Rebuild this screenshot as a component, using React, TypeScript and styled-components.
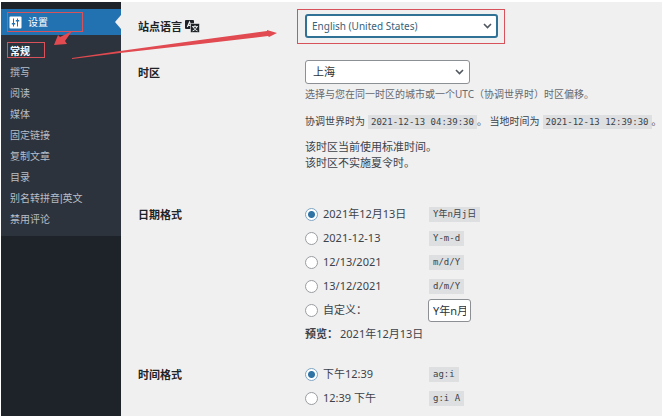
import React, { useState } from "react";
import styled, { createGlobalStyle, css } from "styled-components";

const GlobalStyle = createGlobalStyle`
  *, *::before, *::after { box-sizing: border-box; }
  body {
    margin: 0;
    background: #fff;
    color: #3c434a;
    font: 11px/16px "Noto Sans", "Noto Sans CJK SC", sans-serif;
  }
`;

const Shell = styled.div`
  position: relative;
  display: flex;
  height: 100vh;
  padding: 2px 0 0 1px;
  overflow: hidden;
`;

const Sidebar = styled.nav`
  flex: 0 0 120px;
  padding-top: 7px;
  background: #1d2329;
`;

const MenuHead = styled.a`
  position: relative;
  display: flex;
  align-items: center;
  gap: 6px;
  height: 26px;
  padding-left: 8px;
  background: #2271b1;
  color: #fff;
  font-size: 10px;
  text-decoration: none;

  &::after {
    content: "";
    position: absolute;
    top: 6px;
    right: 0;
    border: 7px solid transparent;
    border-left-width: 0;
    border-right: 6px solid #f0f0f1;
  }
`;

const Submenu = styled.ul`
  margin: 0;
  padding: 6px 0;
  list-style: none;
  background: #2c333c;
`;

const SubmenuLink = styled.a<{ $current?: boolean }>`
  display: block;
  padding-left: 9px;
  font-family: "Liberation Sans", "Noto Sans CJK SC", sans-serif;
  font-size: 10px;
  line-height: 21px;
  color: ${(p) => (p.$current ? "#fff" : "#b9bec5")};
  font-weight: ${(p) => (p.$current ? 700 : 400)};
  text-decoration: none;
`;

const Main = styled.main`
  flex: 1;
  min-width: 0;
  padding: 12px 0 0 17px;
  background: #f0f0f1;
`;

const Field = styled.section<{ $gap: number }>`
  display: grid;
  grid-template-columns: 167px minmax(0, 1fr);
  margin-bottom: ${(p) => p.$gap}px;
`;

const headingStyle = css`
  display: flex;
  align-items: center;
  gap: 3px;
  height: 25px;
  color: #1d2327;
  font-weight: 700;
`;

const FieldLabel = styled.label`
  ${headingStyle}
`;

const FieldHeading = styled.div`
  ${headingStyle}
`;

const SelectBox = styled.div<{ $width: number }>`
  position: relative;
  width: ${(p) => p.$width}px;
  max-width: 100%;
`;

const Select = styled.select<{ $focused?: boolean }>`
  display: block;
  width: 100%;
  height: 24px;
  padding: 0 20px 0 ${(p) => (p.$focused ? 5 : 7)}px;
  appearance: none;
  border: ${(p) => (p.$focused ? "2px solid #2f7296" : "1px solid #8c8f94")};
  border-radius: 3px;
  outline: none;
  background: #fff;
  color: ${(p) => (p.$focused ? "#3b5f78" : "#2c3338")};
  font: inherit;
  font-size: ${(p) => (p.$focused ? 10 : 11)}px;
`;

const Chevron = styled.svg`
  position: absolute;
  top: 8px;
  right: 6px;
  width: 9px;
  height: 8px;
  pointer-events: none;
`;

const Description = styled.p`
  margin: 2px 0 11px;
  font-size: 10px;
  color: #646970;
  white-space: nowrap;
`;

const TimeLine = styled.p`
  margin: 0 0 10px;
  font-size: 10px;
  white-space: nowrap;
`;

const Note = styled.p`
  margin: 0;
`;

const Code = styled.code`
  padding: 2px 4px;
  background: #dedfe0;
  font: 9px/11px "DejaVu Sans Mono", "Noto Sans CJK SC", monospace;
`;

const TimeCode = styled(Code)`
  margin-left: 3px;
  padding: 2px 3px;
`;

const Options = styled.div`
  display: flex;
  flex-direction: column;
`;

const Option = styled.div`
  display: grid;
  grid-template-columns: 124px minmax(0, 1fr);
  align-items: center;
  justify-items: start;
  height: 24px;
`;

const OptionLabel = styled.label`
  display: flex;
  align-items: center;
  gap: 5px;
`;

const Radio = styled.input`
  appearance: none;
  width: 13px;
  height: 13px;
  margin: 0;
  border: 1px solid #9a9da1;
  border-radius: 50%;
  background: #fff;

  &:checked {
    border-color: #7fa6c2;
    background: radial-gradient(circle, #2f74a5 0 3px, #fff 4px);
  }
`;

const FormatInput = styled.input`
  width: 43px;
  height: 23px;
  margin-left: -1px;
  padding: 0 4px;
  border: 1px solid #8c8f94;
  border-radius: 3px;
  background: #fff;
  color: #2c3338;
  font: inherit;
`;

const Preview = styled.p`
  display: flex;
  gap: 2px;
  margin: 4px 0 0;
`;

const Annotations = styled.svg`
  position: absolute;
  top: 0;
  left: 0;
  width: 520px;
  height: 80px;
  pointer-events: none;
`;

function SettingsIcon() {
  return (
    <svg width="13" height="13" viewBox="0 0 13 13" aria-hidden="true">
      <rect x="0.5" y="0.5" width="12" height="12" rx="1" fill="#fff" />
      <path d="M4.5 2.5v8M8.5 2.5v8" stroke="#2271b1" strokeWidth="1" />
      <path d="M2.8 7.8h3.4M6.8 4.8h3.4" stroke="#2271b1" strokeWidth="1.6" />
    </svg>
  );
}

function TranslateIcon() {
  return (
    <svg width="15" height="13" viewBox="0 0 15 13" aria-hidden="true">
      <rect x="0" y="0" width="9" height="9" rx="1" fill="#1d2327" />
      <path d="M2.3 7 4.5 2 6.2 6M3 5.4h2.6" fill="none" stroke="#f0f0f1" strokeWidth="1.1" />
      <rect x="5.5" y="3.5" width="9" height="9" rx="1" fill="#1d2327" stroke="#f0f0f1" strokeWidth="0.6" />
      <path d="M7 6.7h6M10 5.2v1.5M11.8 6.9c-.8 2-2.2 3.2-4.2 4M8.3 6.9c.8 2 2.2 3.2 4.2 4" fill="none" stroke="#f0f0f1" strokeWidth="1" />
    </svg>
  );
}

function ChevronDown() {
  return (
    <Chevron viewBox="0 0 9 8" aria-hidden="true">
      <path d="M1 2l3.5 3.5L8 2" fill="none" stroke="#50575e" strokeWidth="1.6" />
    </Chevron>
  );
}

const menu = ["常规", "撰写", "阅读", "媒体", "固定链接", "复制文章", "目录", "别名转拼音|英文", "禁用评论"];

const dateFormats = [
  { label: "2021年12月13日", code: "Y年n月j日" },
  { label: "2021-12-13", code: "Y-m-d" },
  { label: "12/13/2021", code: "m/d/Y" },
  { label: "13/12/2021", code: "d/m/Y" },
];

const timeFormats = [
  { label: "下午12:39", code: "ag:i" },
  { label: "12:39 下午", code: "g:i A" },
];

export default function App() {
  const [dateFormat, setDateFormat] = useState("Y年n月j日");
  const [timeFormat, setTimeFormat] = useState("ag:i");

  return (
    <>
      <GlobalStyle />
      <Shell>
        <Sidebar>
          <MenuHead href="#settings">
            <SettingsIcon />
            设置
          </MenuHead>
          <Submenu>
            {menu.map((item, i) => (
              <li key={item}>
                <SubmenuLink href="#" $current={i === 0}>
                  {item}
                </SubmenuLink>
              </li>
            ))}
          </Submenu>
        </Sidebar>

        <Main>
          <Field $gap={21}>
            <FieldLabel htmlFor="language">
              站点语言
              <TranslateIcon />
            </FieldLabel>
            <SelectBox $width={193}>
              <Select id="language" $focused>
                <option>English (United States)</option>
              </Select>
              <ChevronDown />
            </SelectBox>
          </Field>

          <Field $gap={31}>
            <FieldLabel htmlFor="timezone">时区</FieldLabel>
            <div>
              <SelectBox $width={165}>
                <Select id="timezone">
                  <option>上海</option>
                </Select>
                <ChevronDown />
              </SelectBox>
              <Description>选择与您在同一时区的城市或一个UTC（协调世界时）时区偏移。</Description>
              <TimeLine>
                协调世界时为
                <TimeCode>2021-12-13 04:39:30</TimeCode>。 当地时间为
                <TimeCode>2021-12-13 12:39:30</TimeCode>。
              </TimeLine>
              <Note>该时区当前使用标准时间。</Note>
              <Note>该时区不实施夏令时。</Note>
            </div>
          </Field>

          <Field $gap={20}>
            <FieldHeading id="date-heading">日期格式</FieldHeading>
            <Options role="radiogroup" aria-labelledby="date-heading">
              {dateFormats.map((f) => (
                <Option key={f.code}>
                  <OptionLabel>
                    <Radio type="radio" name="date" checked={dateFormat === f.code} onChange={() => setDateFormat(f.code)} />
                    {f.label}
                  </OptionLabel>
                  <Code>{f.code}</Code>
                </Option>
              ))}
              <Option>
                <OptionLabel>
                  <Radio type="radio" name="date" checked={dateFormat === "custom"} onChange={() => setDateFormat("custom")} />
                  自定义：
                </OptionLabel>
                <FormatInput type="text" aria-label="自定义" defaultValue="Y年n月" />
              </Option>
              <Preview>
                <strong>预览：</strong>
                <span>2021年12月13日</span>
              </Preview>
            </Options>
          </Field>

          <Field $gap={0}>
            <FieldHeading id="time-heading">时间格式</FieldHeading>
            <Options role="radiogroup" aria-labelledby="time-heading">
              {timeFormats.map((f) => (
                <Option key={f.code}>
                  <OptionLabel>
                    <Radio type="radio" name="time" checked={timeFormat === f.code} onChange={() => setTimeFormat(f.code)} />
                    {f.label}
                  </OptionLabel>
                  <Code>{f.code}</Code>
                </Option>
              ))}
            </Options>
          </Field>
        </Main>

        <Annotations viewBox="0 0 520 80" aria-hidden="true">
          <g fill="none" stroke="#d8525c">
            <rect x="7.5" y="12.5" width="75" height="19" />
            <rect x="7.5" y="42.5" width="37" height="15" />
            <rect x="297.5" y="9.5" width="207" height="34" />
          </g>
          <g fill="#e04a50">
            <path d="M72 31 60 37 58 35 54 45 67 44 65 41Z" />
            <path d="M72 58 120 51 200 40 267 31 267 30 277 33 269 37 268 36 200 44 120 53 72 59Z" />
          </g>
        </Annotations>
      </Shell>
    </>
  );
}
